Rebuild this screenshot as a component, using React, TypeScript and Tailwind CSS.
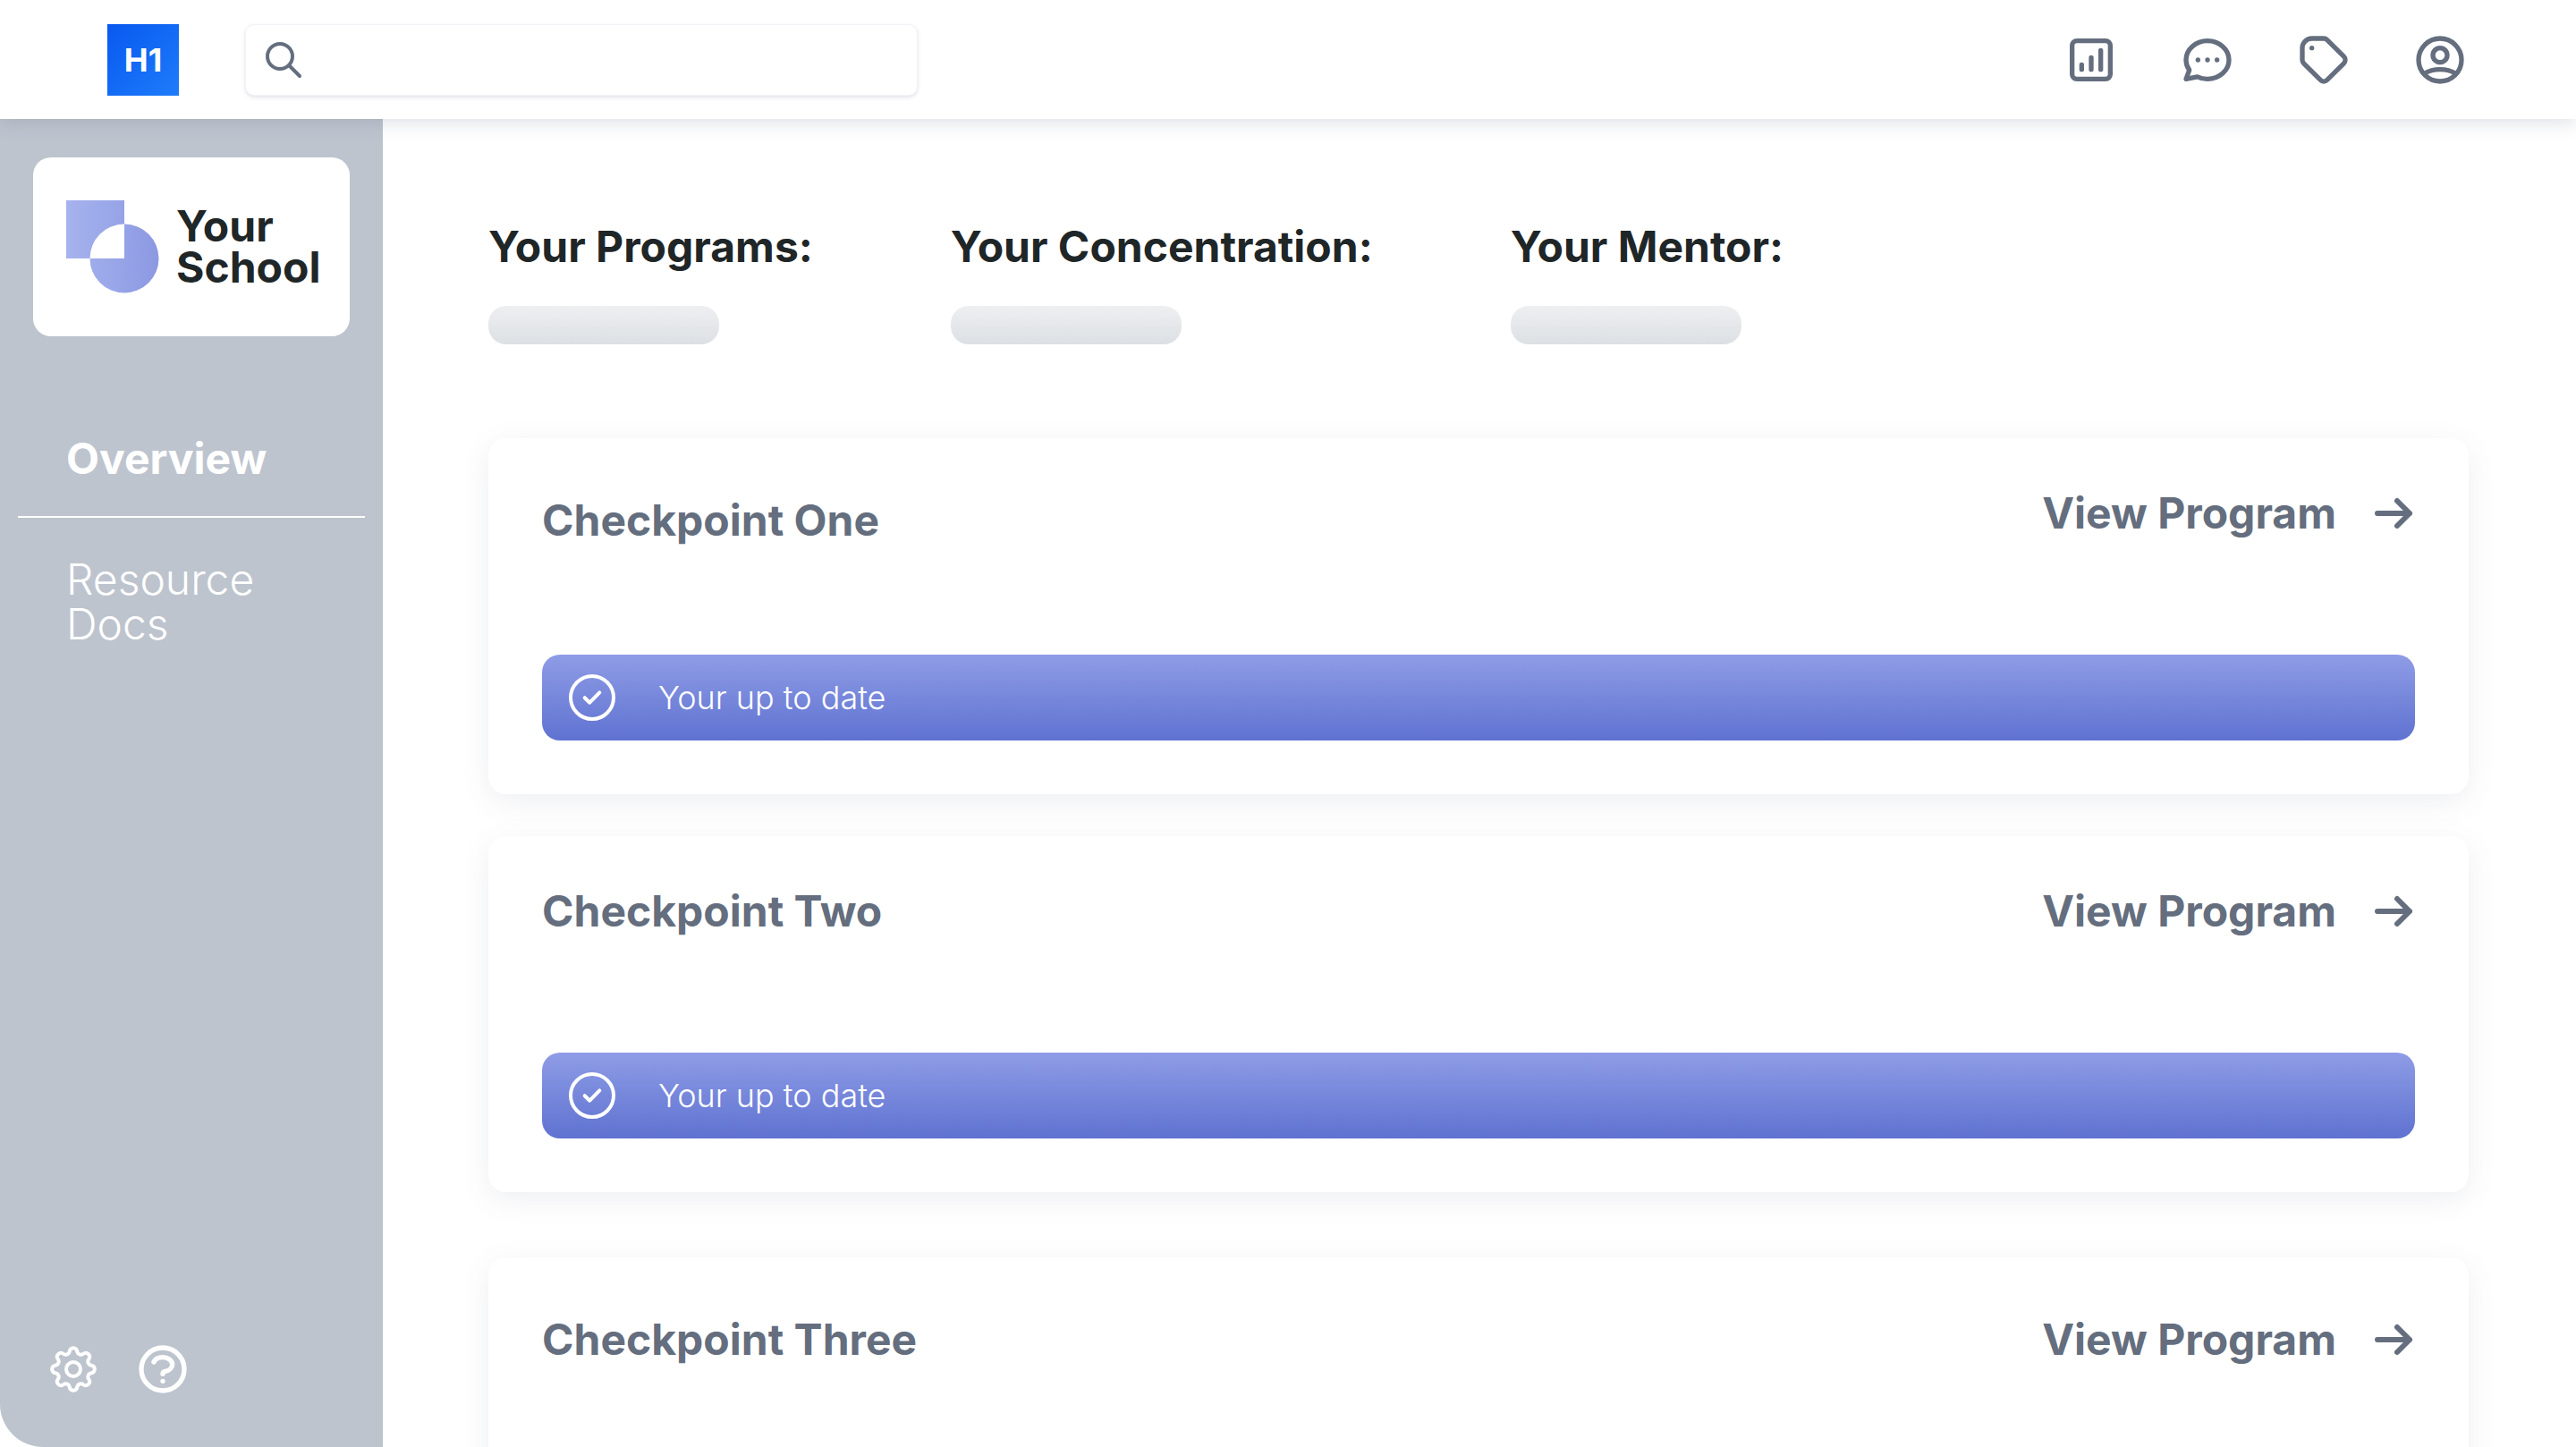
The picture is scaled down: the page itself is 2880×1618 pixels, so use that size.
import type { ReactNode } from 'react';
import clsx from 'clsx';

const profile = ['Your Programs:', 'Your Concentration:', 'Your Mentor:'];

const checkpoints = [
  { title: 'Checkpoint One', spacing: 'mt-0', titleOffset: 'pt-2', linkOffset: 'pt-0' },
  { title: 'Checkpoint Two', spacing: 'mt-[47px]', titleOffset: 'pt-0', linkOffset: 'pt-0' },
  { title: 'Checkpoint Three', spacing: 'mt-[73px]', titleOffset: 'pt-2', linkOffset: 'pt-2' },
];

const actions = [
  {
    label: 'Reports',
    path: 'M16 8v8m-4-5v5m-4-2v2m-2 4h12a2 2 0 002-2V6a2 2 0 00-2-2H6a2 2 0 00-2 2v12a2 2 0 002 2z',
  },
  {
    label: 'Messages',
    path: 'M8 12h.01M12 12h.01M16 12h.01M21 12c0 4.418-4.03 8-9 8a9.863 9.863 0 01-4.255-.949L3 20l1.395-3.72C3.512 15.042 3 13.574 3 12c0-4.418 4.03-8 9-8s9 3.582 9 8z',
  },
  {
    label: 'Tags',
    path: 'M7 7h.01M7 3h5c.512 0 1.024.195 1.414.586l7 7a2 2 0 010 2.828l-7 7a2 2 0 01-2.828 0l-7-7A1.994 1.994 0 013 12V7a4 4 0 014-4z',
  },
  {
    label: 'Account',
    path: 'M5.121 17.804A13.937 13.937 0 0112 16c2.5 0 4.847.655 6.879 1.804M15 10a3 3 0 11-6 0 3 3 0 016 0zm6 2a9 9 0 11-18 0 9 9 0 0118 0z',
  },
];

const helpPath =
  'M8.228 9c.549-1.165 2.03-2 3.772-2 2.21 0 4 1.343 4 3 0 1.4-1.278 2.575-3.006 2.907-.542.104-.994.54-.994 1.093m0 3h.01M21 12a9 9 0 11-18 0 9 9 0 0118 0z';

// Eight round teeth: convex arc over each tooth, concave arc into the next one
function gearPath() {
  const point = (deg: number) => {
    const a = (deg * Math.PI) / 180;
    return `${(32 + 20.58 * Math.cos(a)).toFixed(2)} ${(32 + 20.58 * Math.sin(a)).toFixed(2)}`;
  };
  let d = `M${point(-11.94)}`;
  for (let i = 0; i < 8; i++) {
    d += `A4.3 4.3 0 0 1 ${point(i * 45 + 11.94)}A4.3 4.3 0 0 0 ${point(i * 45 + 33.06)}`;
  }
  return d + 'Z';
}

function Icon({ path, className, strokeWidth = 2 }: { path: string; className: string; strokeWidth?: number }) {
  return (
    <svg
      viewBox="0 0 24 24"
      fill="none"
      stroke="currentColor"
      strokeWidth={strokeWidth}
      strokeLinecap="round"
      strokeLinejoin="round"
      aria-hidden="true"
      className={clsx('shrink-0', className)}
    >
      <path d={path} />
    </svg>
  );
}

function IconButton({ label, children }: { label: string; children: ReactNode }) {
  return (
    <button type="button" aria-label={label} className="cursor-pointer">
      {children}
    </button>
  );
}

function Header() {
  return (
    <header className="relative z-10 flex h-[133px] shrink-0 items-center bg-white pr-[120px] pl-[120px] shadow-[0_4px_20px_rgba(90,100,125,0.2)]">
      <a
        href="#"
        className="flex size-20 items-center justify-center bg-linear-to-br from-[#0a58f0] to-[#1f7cfa] text-4xl font-bold text-white"
      >
        H1
      </a>
      <label className="ml-[74px] flex h-20 w-[752px] items-center rounded-[10px] border border-[#f1f3f6] bg-white pl-[18px] text-[#646e7e] shadow-[0_2px_4px_rgba(90,100,125,0.18)]">
        <Icon path="M21 21l-6-6m2-5a7 7 0 11-14 0 7 7 0 0114 0z" className="size-12" />
        <input type="search" aria-label="Search" className="h-full min-w-0 flex-1 bg-transparent px-4 text-4xl outline-none" />
      </label>
      <div className="ml-auto flex gap-[66px] text-[#646e7e]">
        {actions.map((action) => (
          <IconButton key={action.label} label={action.label}>
            <Icon path={action.path} className="size-16" />
          </IconButton>
        ))}
      </div>
    </header>
  );
}

function SchoolCard() {
  return (
    <div className="mx-[37px] flex h-[200px] items-center gap-[19px] rounded-[20px] bg-white pl-[37px] text-[#1f2628]">
      <svg viewBox="0 0 104 104" className="size-[104px] shrink-0" aria-hidden="true">
        <defs>
          <linearGradient id="mark" x1="0" y1="0" x2="1" y2="0">
            <stop offset="0" stopColor="#a6b3ee" />
            <stop offset="1" stopColor="#8c99e2" />
          </linearGradient>
        </defs>
        <path
          fill="url(#mark)"
          fillRule="evenodd"
          d="M0 0h65v65H0zM65 26.500a38.500 38.500 0 1 1 0 77a38.500 38.500 0 1 1 0-77z"
        />
      </svg>
      <p className="text-5xl leading-[46px] font-bold">
        Your
        <br />
        School
      </p>
    </div>
  );
}

function Sidebar() {
  return (
    <aside className="flex w-[428px] shrink-0 flex-col rounded-bl-[48px] bg-[#bdc4ce] pt-[43px] text-white">
      <SchoolCard />
      <nav className="mx-5 mt-[112px] text-5xl leading-[50px]">
        <a href="#" className="block border-b-2 border-white px-[54px] pb-[39px] font-bold">
          Overview
        </a>
        <a href="#" className="mt-11 block px-[54px] font-light">
          Resource
          <br />
          Docs
        </a>
      </nav>
      <div className="mt-auto flex gap-9 pb-[55px] pl-[50px]">
        <IconButton label="Settings">
          <svg viewBox="0 0 64 64" fill="none" stroke="currentColor" strokeWidth="4" className="size-16" aria-hidden="true">
            <path d={gearPath()} />
            <circle cx="32" cy="32" r="8" />
          </svg>
        </IconButton>
        <IconButton label="Help">
          <Icon path={helpPath} className="size-16" />
        </IconButton>
      </div>
    </aside>
  );
}

function StatusBar() {
  return (
    <div className="flex h-24 items-center gap-12 rounded-[20px] bg-linear-to-b from-[#8f9ce6] to-[#5f72d0] pl-[30px] text-white">
      <svg viewBox="0 0 52 52" fill="none" stroke="currentColor" strokeWidth="4" className="size-[52px]" aria-hidden="true">
        <circle cx="26" cy="26" r="24" />
        <path d="M17.700 26.200l5.600 5.500 11-11.300" strokeLinecap="round" strokeLinejoin="round" />
      </svg>
      <span className="text-4xl font-light">Your up to date</span>
    </div>
  );
}

export default function App() {
  return (
    <div className="flex h-screen flex-col bg-white font-['Inter',sans-serif]">
      <Header />
      <div className="flex min-h-0 flex-1">
        <Sidebar />
        <main className="min-w-0 flex-1 overflow-y-auto pt-[115px] pr-[120px] pl-[118px] [scrollbar-width:none]">
          <div className="flex gap-[154px]">
            {profile.map((heading) => (
              <section key={heading}>
                <h2 className="text-5xl leading-[56px] font-bold text-[#1f2628]">{heading}</h2>
                <div className="mt-[38px] h-[43px] w-[258px] rounded-[20px] bg-linear-to-b from-[#eeeff1] to-[#dce0e4]" />
              </section>
            ))}
          </div>

          <div className="mt-[105px]">
            {checkpoints.map((checkpoint) => (
              <article
                key={checkpoint.title}
                className={clsx(
                  'flex h-[398px] flex-col justify-between rounded-[20px] bg-white p-[60px] pt-14 shadow-[0_8px_32px_rgba(90,100,125,0.1)]',
                  checkpoint.spacing,
                )}
              >
                <div className="flex items-start justify-between text-5xl leading-[56px] font-bold text-[#646e7e]">
                  <h3 className={checkpoint.titleOffset}>{checkpoint.title}</h3>
                  <a href="#" className={clsx('flex items-center gap-10', checkpoint.linkOffset)}>
                    View Program
                    <Icon path="M14 5l7 7m0 0l-7 7m7-7H3" className="size-12" strokeWidth={3} />
                  </a>
                </div>
                <StatusBar />
              </article>
            ))}
          </div>
        </main>
      </div>
    </div>
  );
}
